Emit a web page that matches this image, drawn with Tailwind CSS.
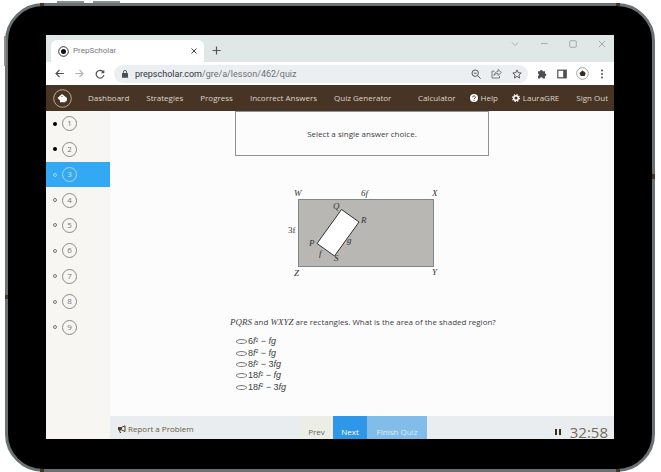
<!DOCTYPE html>
<html lang="en">
<head>
  <meta charset="UTF-8" />
  <meta name="viewport" content="width=device-width, initial-scale=1.0" />
  <title>PrepScholar</title>
  <script src="https://cdn.jsdelivr.net/npm/@tailwindcss/browser@4"></script>
</head>
<body class="min-h-screen flex flex-col bg-white pt-[3px] pl-[5px] pr-[6px] font-['Open_Sans','Noto_Sans',sans-serif] text-[8px] leading-3 text-[#3c4043]">

  <!-- Tablet -->
  <div class="relative flex-1 flex flex-col rounded-[38px] border-3 border-[#6b7072] bg-black px-[38px] pt-[29px] pb-[30px]">
    <!-- Side buttons and antenna bands -->
    <div class="absolute left-[49px] -top-[5px] w-[27px] h-[2px] bg-[#8b908f]"></div>
    <div class="absolute left-[85px] -top-[5px] w-[27px] h-[2px] bg-[#8b908f]"></div>
    <div class="absolute -left-[4px] top-[30px] w-[2px] h-[30px] bg-[#8b908f]"></div>
    <div class="absolute left-[32px] -top-[3px] w-[4px] h-[3px] bg-[#4a3322]"></div>
    <div class="absolute right-[32px] -top-[3px] w-[4px] h-[3px] bg-[#4a3322]"></div>
    <div class="absolute left-[32px] -bottom-[3px] w-[4px] h-[3px] bg-[#4a3322]"></div>
    <div class="absolute right-[32px] -bottom-[3px] w-[4px] h-[3px] bg-[#4a3322]"></div>
    <div class="absolute -right-[3px] top-[168px] w-[3px] h-[5px] bg-[#4a3322]"></div>
    <div class="absolute -left-[3px] top-[289px] w-[3px] h-[4px] bg-[#4a3322]"></div>

    <!-- Screen -->
    <div class="flex-1 flex flex-col bg-[#fcfcfc]">

      <!-- Tab strip -->
      <div class="flex items-end h-[27px] bg-[#e0e7e7] pl-[5px] pr-2">
        <div class="flex items-center w-[153px] h-[22px] rounded-t-md bg-white pl-[7px] pr-[7px]">
          <svg class="size-[11px] mr-[4px]" viewBox="0 0 11 11">
            <circle cx="5.5" cy="5.5" r="4.8" fill="none" stroke="#333" stroke-width="1" />
            <circle cx="5.5" cy="5.5" r="2.5" fill="#111" />
          </svg>
          <span class="flex-1 font-[Roboto,sans-serif] text-[#777b7e]">PrepScholar</span>
          <button aria-label="Close tab">
            <svg class="size-[6px]" viewBox="0 0 6 6" stroke="#444" stroke-width="1"><path d="M.5.5l5 5M5.5.5l-5 5" /></svg>
          </button>
        </div>
        <button class="self-end ml-[8px] mb-[7px]" aria-label="New tab">
          <svg class="size-[9px]" viewBox="0 0 9 9" stroke="#555" stroke-width="1.2"><path d="M4.5.5v8M.5 4.5h8" /></svg>
        </button>
        <div class="flex-1 self-start flex justify-end gap-[21px] pt-[5px]">
          <button aria-label="Search tabs"><svg class="size-[8px]" viewBox="0 0 8 8" fill="none" stroke="#a6abab"><path d="M1 2.5l3 3 3-3" /></svg></button>
          <button aria-label="Minimize"><svg class="size-[8px]" viewBox="0 0 8 8" fill="none" stroke="#a6abab"><path d="M1 3.5h6.500" /></svg></button>
          <button aria-label="Maximize"><svg class="size-[8px]" viewBox="0 0 8 8" fill="none" stroke="#a6abab"><rect x=".7" y=".7" width="6.600" height="6.600" rx="1" /></svg></button>
          <button aria-label="Close"><svg class="size-[8px]" viewBox="0 0 8 8" fill="none" stroke="#a6abab"><path d="M.8.8l6.400 6.400M7.200.8L.8 7.200" /></svg></button>
        </div>
      </div>

      <!-- Toolbar -->
      <div class="flex items-center h-[23px] bg-white pl-[9px] pr-[8px]">
        <button aria-label="Back"><svg class="size-[9px]" viewBox="0 0 9 9" fill="none" stroke="#4c4f52" stroke-width="1.1"><path d="M8.800 4.500H1M4.500 1L1 4.500l3.500 3.500" /></svg></button>
        <button class="ml-[11px]" aria-label="Forward"><svg class="size-[9px]" viewBox="0 0 9 9" fill="none" stroke="#b0b3b5" stroke-width="1.1"><path d="M.2 4.500H8M4.500 1L8 4.500 4.500 8" /></svg></button>
        <button class="ml-[11px]" aria-label="Reload"><svg class="size-[10px]" viewBox="0 0 10 10" fill="none" stroke="#4c4f52" stroke-width="1.2"><path d="M8.300 3A3.900 3.900 0 1 0 8.900 6" /><path d="M9.300.8v3.400H5.900z" fill="#4c4f52" stroke="none" /></svg></button>
        <div class="flex-1 flex items-center h-[18px] rounded-full bg-[#ebeff2] ml-[9px] pl-[8px] pr-[6px]">
          <svg class="w-[6px] h-[8px] mr-[7px]" viewBox="0 0 6 8"><rect y="3" width="6" height="4.800" rx=".6" fill="#4c4f52" /><path d="M1.400 3V2a1.600 1.600 0 0 1 3.200 0v1" fill="none" stroke="#4c4f52" stroke-width=".9" /></svg>
          <span class="flex-1 font-[Roboto,sans-serif] text-[9px] text-[#6c7073]"><span class="text-[#303336]">prepscholar.com</span>/gre/a/lesson/462/quiz</span>
          <button aria-label="Zoom"><svg class="size-[10px]" viewBox="0 0 10 10" fill="none" stroke="#55595c"><circle cx="4.200" cy="4.200" r="3.200" /><path d="M6.600 6.600l3 3M2.800 4.200h2.800" /></svg></button>
          <button class="ml-[10px]" aria-label="Share"><svg class="size-[11px]" viewBox="0 0 11 11" fill="none" stroke="#6a6e71" stroke-width=".9"><path d="M3.500 3.200H1v6.800h7.500V8" /><path d="M3 7.500C3.300 5 4.800 3.800 7 3.700V1.500l3.400 3-3.400 3V5.500C5.300 5.500 4 6 3 7.500z" /></svg></button>
          <button class="ml-[10px]" aria-label="Bookmark"><svg class="size-[10px]" viewBox="0 0 10 10" fill="none" stroke="#4c4f52" stroke-width=".9"><path d="M5 .9l1.200 2.800 3 .3-2.300 2 .7 3L5 7.400 2.400 9l.7-3L.8 4l3-.3z" /></svg></button>
        </div>
        <button class="ml-[9px]" aria-label="Extensions"><svg class="size-[10px]" viewBox="0 0 10 10" fill="#4c4f52"><path d="M3 2.300a1.300 1.300 0 0 1 2.600 0H8v2.200a1.300 1.300 0 0 1 0 2.700v2.300H5.700a1.300 1.300 0 0 0-2.600 0H1V7a1.300 1.300 0 0 0 0-2.500V2.300z" /></svg></button>
        <button class="ml-[10px]" aria-label="Side panel"><svg class="size-[10px]" viewBox="0 0 10 10"><rect x=".8" y="1.200" width="8.400" height="7.600" fill="none" stroke="#4c4f52" stroke-width="1.200" /><path d="M6.200 1h3v8h-3z" fill="#4c4f52" /></svg></button>
        <button class="ml-[9px]" aria-label="Profile"><svg class="size-[13px]" viewBox="0 0 13 13"><circle cx="6.500" cy="6.500" r="5.800" fill="#fff" stroke="#999" stroke-width=".9" /><path d="M6.500 3.500l3.200 2.600-1 2.900H4.700l-1.200-2.900z" fill="#3b2a1c" /></svg></button>
        <button class="ml-[9px]" aria-label="Menu"><svg class="w-[8px] h-[10px]" viewBox="0 0 8 10" fill="#4c4f52"><circle cx="4" cy="1.500" r="1" /><circle cx="4" cy="5" r="1" /><circle cx="4" cy="8.500" r="1" /></svg></button>
      </div>

      <!-- Site nav -->
      <nav class="flex items-center h-[26px] bg-[#483424] text-[#ddd6cc] pl-[7px] pr-[6px]">
        <a href="#" class="mr-[16px]" aria-label="PrepScholar home">
          <svg class="size-[19px]" viewBox="0 0 19 19"><circle cx="9.500" cy="9.500" r="8.800" fill="none" stroke="#c9b892" stroke-width=".9" /><path d="M9 5l5 4-.3 3.300-1.200-.3v1.200H7V11.500L4.500 9z" fill="#fff" /><circle cx="9" cy="7.500" r=".6" fill="#483424" /></svg>
        </a>
        <div class="flex-1 flex gap-[17px]">
          <a href="#">Dashboard</a>
          <a href="#">Strategies</a>
          <a href="#">Progress</a>
          <a href="#">Incorrect Answers</a>
          <a href="#">Quiz Generator</a>
        </div>
        <div class="flex">
          <a href="#" class="mr-[14px]">Calculator</a>
          <a href="#" class="flex items-center gap-[3px] mr-[14px]">
            <svg class="size-[8px]" viewBox="0 0 8 8"><circle cx="4" cy="4" r="4" fill="#fff" /><path d="M2.700 3.200a1.300 1.300 0 1 1 2 1.100c-.5.3-.7.4-.7.900M4 5.900v.8" fill="none" stroke="#483424" stroke-width="1" /></svg>
            Help
          </a>
          <a href="#" class="flex items-center gap-[3px] mr-[17px]">
            <svg class="size-[8px]" viewBox="0 0 8 8" fill="none"><circle cx="4" cy="4" r="2.300" stroke="#fff" stroke-width="1.500" /><circle cx="4" cy="4" r="3.400" stroke="#fff" stroke-width="1.200" stroke-dasharray="1.335" /></svg>
            LauraGRE
          </a>
          <a href="#">Sign Out</a>
        </div>
      </nav>

      <div class="flex-1 flex">
        <!-- Question list -->
        <aside class="w-[64px] shrink-0 bg-[#f7f6f2]">
          <ol class="h-[229px] flex flex-col text-[#777]">
            <li class="flex-1 flex items-center gap-[5px] pl-[7px]"><span class="size-[4px] rounded-full bg-black"></span><a href="#" class="size-[15px] rounded-full border border-[#8a8a88] text-center leading-[12px]">1</a></li>
            <li class="flex-1 flex items-center gap-[5px] pl-[7px]"><span class="size-[4px] rounded-full bg-black"></span><a href="#" class="size-[15px] rounded-full border border-[#8a8a88] text-center leading-[12px]">2</a></li>
            <li class="flex-1 flex items-center gap-[5px] pl-[7px] bg-[#33a9f3] text-[#d8e6ee]"><span class="size-[4px] rounded-full border border-[#a9cfe6]"></span><a href="#" class="size-[15px] rounded-full border border-[#b5d3e4] text-center leading-[12px]">3</a></li>
            <li class="flex-1 flex items-center gap-[5px] pl-[7px]"><span class="size-[4px] rounded-full border border-[#777]"></span><a href="#" class="size-[15px] rounded-full border border-[#8a8a88] text-center leading-[12px]">4</a></li>
            <li class="flex-1 flex items-center gap-[5px] pl-[7px]"><span class="size-[4px] rounded-full border border-[#777]"></span><a href="#" class="size-[15px] rounded-full border border-[#8a8a88] text-center leading-[12px]">5</a></li>
            <li class="flex-1 flex items-center gap-[5px] pl-[7px]"><span class="size-[4px] rounded-full border border-[#777]"></span><a href="#" class="size-[15px] rounded-full border border-[#8a8a88] text-center leading-[12px]">6</a></li>
            <li class="flex-1 flex items-center gap-[5px] pl-[7px]"><span class="size-[4px] rounded-full border border-[#777]"></span><a href="#" class="size-[15px] rounded-full border border-[#8a8a88] text-center leading-[12px]">7</a></li>
            <li class="flex-1 flex items-center gap-[5px] pl-[7px]"><span class="size-[4px] rounded-full border border-[#777]"></span><a href="#" class="size-[15px] rounded-full border border-[#8a8a88] text-center leading-[12px]">8</a></li>
            <li class="flex-1 flex items-center gap-[5px] pl-[7px]"><span class="size-[4px] rounded-full border border-[#777]"></span><a href="#" class="size-[15px] rounded-full border border-[#8a8a88] text-center leading-[12px]">9</a></li>
          </ol>
        </aside>

        <main class="flex-1 min-w-0 flex flex-col">
          <div class="flex-1 flex flex-col px-[120px]">
            <div class="self-center w-[254px] h-[45px] border border-[#8b9395] flex items-center justify-center">Select a single answer choice.</div>

            <!-- Figure -->
            <svg class="self-center w-[160px] h-[96px] mt-[29px] font-['Liberation_Serif',serif] text-[9px] italic" viewBox="0 0 160 96" fill="#333">
              <rect x="16.500" y="14.500" width="135" height="67" fill="#b8b7b4" stroke="#7d888c" />
              <path d="M59.500 24.500l17.500 12.500-24.500 34L35 58.500z" fill="#fff" stroke="#333" />
              <text x="12" y="11">W</text>
              <text x="79" y="11">6f</text>
              <text x="150" y="11">X</text>
              <text x="6" y="48" class="not-italic">3f</text>
              <text x="51" y="24">Q</text>
              <text x="79" y="38">R</text>
              <text x="27" y="61">P</text>
              <text x="65" y="58">g</text>
              <text x="37" y="71">f</text>
              <text x="52" y="76">S</text>
              <text x="12" y="91">Z</text>
              <text x="150" y="90">Y</text>
            </svg>

            <p class="mt-[35px] whitespace-nowrap"><i class="font-['Liberation_Serif',serif] text-[9px]">PQRS</i> and <i class="font-['Liberation_Serif',serif] text-[9px]">WXYZ</i> are rectangles. What is the area of the shaded region?</p>

            <form class="mt-[8px] pl-[6px] h-[57px] flex flex-col font-['Liberation_Sans',sans-serif] text-[9px] leading-[11px]">
              <label class="flex-1 flex items-center gap-px"><input type="radio" name="answer" class="appearance-none w-[11px] h-[5px] rounded-[50%] border border-[#777]" /><span>6<i>f</i><sup class="text-[5px]">2</sup> − <i>fg</i></span></label>
              <label class="flex-1 flex items-center gap-px"><input type="radio" name="answer" class="appearance-none w-[11px] h-[5px] rounded-[50%] border border-[#777]" /><span>8<i>f</i><sup class="text-[5px]">2</sup> − <i>fg</i></span></label>
              <label class="flex-1 flex items-center gap-px"><input type="radio" name="answer" class="appearance-none w-[11px] h-[5px] rounded-[50%] border border-[#777]" /><span>8<i>f</i><sup class="text-[5px]">2</sup> − 3<i>fg</i></span></label>
              <label class="flex-1 flex items-center gap-px"><input type="radio" name="answer" class="appearance-none w-[11px] h-[5px] rounded-[50%] border border-[#777]" /><span>18<i>f</i><sup class="text-[5px]">2</sup> − <i>fg</i></span></label>
              <label class="flex-1 flex items-center gap-px"><input type="radio" name="answer" class="appearance-none w-[11px] h-[5px] rounded-[50%] border border-[#777]" /><span>18<i>f</i><sup class="text-[5px]">2</sup> − 3<i>fg</i></span></label>
            </form>
          </div>

          <!-- Footer -->
          <footer class="flex h-[23px] bg-[#e9edef] pl-[8px] pr-[6px]">
            <div class="w-[182px]">
              <a href="#" class="flex items-center gap-[2px] pt-[7px] text-[#6b5a3c]">
                <svg class="w-[8px] h-[8px]" viewBox="0 0 8 8" fill="none" stroke="#4a3a1c" stroke-width="1"><path d="M.3 2.500h3v2.300h-3z" fill="#4a3a1c" /><path d="M3.300 2.500L7 .8v5.700L3.300 4.800M1.500 4.800l.6 2.700h1" /></svg>
                Report a Problem
              </a>
            </div>
            <button class="w-[33px] bg-[#eceee6] text-[#666] pt-[9px]">Prev</button>
            <button class="w-[34px] bg-[#2f97e8] text-white pt-[9px]">Next</button>
            <button class="w-[60px] bg-[#82bdea] text-[#dcebf5] pt-[9px]">Finish Quiz</button>
            <div class="flex-1 flex items-center justify-end gap-[9px] pt-[8px]">
              <button aria-label="Pause"><svg class="size-[6px]" viewBox="0 0 6 6" fill="#3b2c1a"><path d="M0 0h2v6H0zM4 0h2v6H4z" /></svg></button>
              <time class="text-[15px] leading-4 text-[#746b5a]">32:58</time>
            </div>
          </footer>
        </main>
      </div>
    </div>
  </div>
</body>
</html>
